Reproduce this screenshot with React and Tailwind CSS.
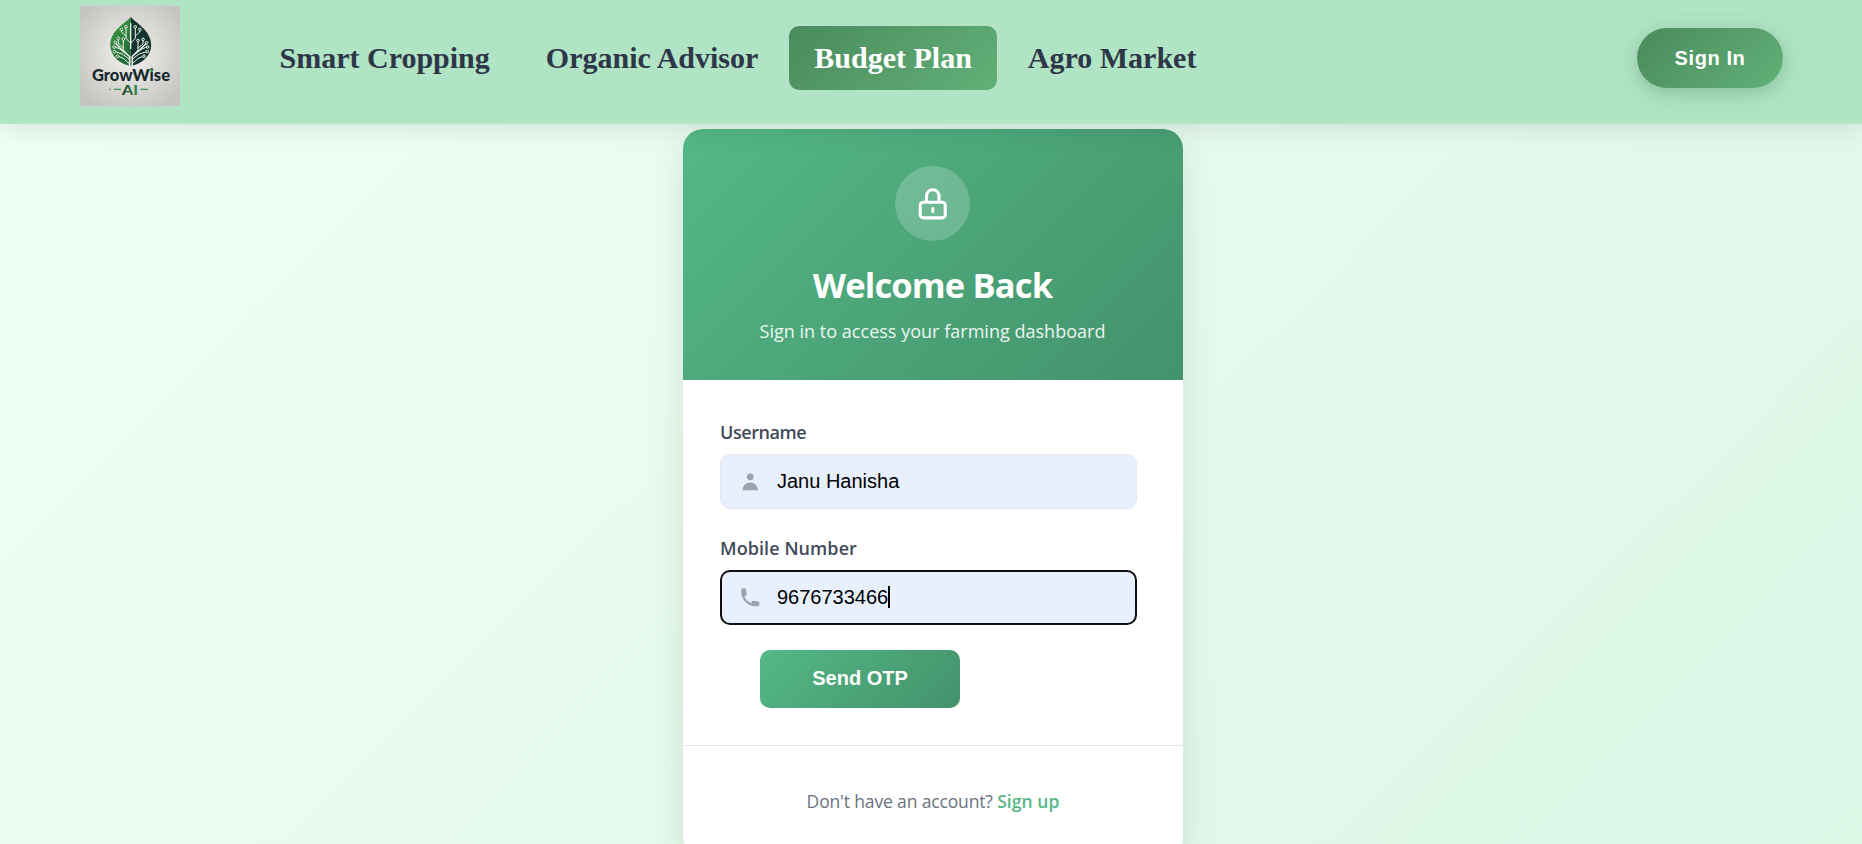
const navItems = [
  { label: "Smart Cropping" },
  { label: "Organic Advisor" },
  { label: "Budget Plan", active: true },
  { label: "Agro Market" },
];

const leafNodes = [
  [41.5, 23.5], [46, 20.8], [55.3, 20.8], [59.8, 23.5],
  [43.3, 33], [38.3, 32.4], [35.2, 36.3], [34.2, 41], [34.4, 45.6], [37.5, 50.2],
  [58, 34.5], [63, 33.4], [66.6, 36.8], [67.6, 41], [67.2, 45.6], [64, 50.2],
];

function Logo() {
  return (
    <svg viewBox="0 0 100 100" className="h-[100px] w-[100px] shrink-0" role="img" aria-label="GrowWise AI">
      <defs>
        <radialGradient id="logoBg" cx="50%" cy="48%" r="62%">
          <stop offset="0" stopColor="#f0f0ee" />
          <stop offset="0.5" stopColor="#dcdbd8" />
          <stop offset="1" stopColor="#c6c4c0" />
        </radialGradient>
        <linearGradient id="leafLeft" x1="0" y1="0" x2="0.4" y2="1">
          <stop offset="0" stopColor="#3fa044" />
          <stop offset="1" stopColor="#236b36" />
        </linearGradient>
        <linearGradient id="aiText" x1="0" y1="0" x2="1" y2="0">
          <stop offset="0" stopColor="#173a30" />
          <stop offset="1" stopColor="#379044" />
        </linearGradient>
      </defs>
      <rect width="100" height="100" fill="url(#logoBg)" />
      <path d="M50.7 10.7C46 17 30.3 24 30.3 39C30.3 50 40 58 50.7 60Z" fill="url(#leafLeft)" />
      <path d="M50.7 10.7C55.5 17 71.2 24 71.2 39C71.2 50 61.5 58 50.7 60Z" fill="#13332f" />
      <path d="M50.7 43V17" stroke="#eef4ee" strokeWidth="1.3" />
      <g fill="none" stroke="#eef4ee" strokeWidth="1" strokeLinecap="round" strokeLinejoin="round">
        <path d="M49.6 60V50.5L41.5 43.5L36 37.5M52.2 60V50.5L60 43.5L66 37.8" strokeWidth="1.5" />
        <path d="M50.7 37L46 32.5V22.5M50.7 37L55.3 32.5V22.5M46 30L41.5 26V25M55.3 30L59.8 26V25" />
        <path d="M47.5 48.5L43.3 44V34.5M43.3 42L38.3 37V34M54 48.5L58 44V36M58 42L63 38V35" />
        <path d="M45 47L40 43L35.5 41.2M49 53L42.5 48L36 46M49 57.5L43.5 52.5L39 50.6M56.5 47L62 43L66.4 41.2M52.5 53L59 48L65.6 46M52.5 57.5L58 52.5L62.5 50.6" />
      </g>
      <g fill="#2d6a3d" stroke="#eef4ee" strokeWidth="0.9">
        {leafNodes.map(([cx, cy]) => (
          <circle key={`${cx}-${cy}`} cx={cx} cy={cy} r="1.35" />
        ))}
      </g>
      <text x="12" y="75.2" textLength="78" lengthAdjust="spacingAndGlyphs" fontFamily="Lato, sans-serif" fontWeight="900" fontSize="16.5" fill="#16282b">
        GrowWise
      </text>
      <circle cx="71.6" cy="64.6" r="1.5" fill="#3d9a48" />
      <text x="42" y="89.3" textLength="16" lengthAdjust="spacingAndGlyphs" fontFamily="Lato, sans-serif" fontWeight="900" fontSize="14" fill="url(#aiText)">
        AI
      </text>
      <path d="M34 83.3H41M60.5 83.3H68M29 83.3H30.5" stroke="#3f9550" strokeWidth="1.3" />
    </svg>
  );
}

function Navbar() {
  return (
    <header className="relative z-10 flex h-[124px] shrink-0 items-start border-b border-[#b9e7cc] bg-[#b1e3c5] pl-20 pr-[79px] shadow-[0_5px_25px_rgba(0,0,0,0.1)]">
      <div className="pt-1.5">
        <Logo />
      </div>
      <nav className="ml-[74.5px] mt-[26px] flex gap-[6px] font-['Liberation_Serif',serif] text-[30px] font-bold">
        {navItems.map((item) => (
          <a
            key={item.label}
            className={
              item.active
                ? "flex h-16 items-center rounded-[10px] bg-linear-135 from-[#4a8b5c] to-[#62b078] px-[25px] pb-[2px] text-white"
                : "flex h-16 items-center rounded-[10px] px-[25px] pb-[2px] text-[#2d3748]"
            }
          >
            {item.label}
          </a>
        ))}
      </nav>
      <button className="ml-auto mt-7 h-[60px] w-[146px] rounded-full bg-linear-135 from-[#4a8b5c] to-[#62b078] pb-px font-['Liberation_Sans',sans-serif] text-xl font-bold tracking-[0.6px] text-white shadow-[0_5px_19px_rgba(74,139,92,0.4)]">
        Sign In
      </button>
    </header>
  );
}

function LockIcon() {
  return (
    <svg viewBox="0 0 24 24" className="size-[37.5px]" fill="none" stroke="white" strokeWidth="2" strokeLinecap="round" strokeLinejoin="round">
      <path d="M12 15v2m-6 4h12a2 2 0 002-2v-6a2 2 0 00-2-2H6a2 2 0 00-2 2v6a2 2 0 002 2zm10-10V7a4 4 0 00-8 0v4h8z" />
    </svg>
  );
}

function UserIcon() {
  return (
    <svg viewBox="0 0 20 20" className="size-[22.5px]" fill="#9ca3af">
      <path fillRule="evenodd" d="M10 9a3 3 0 100-6 3 3 0 000 6zm-7 9a7 7 0 1114 0H3z" clipRule="evenodd" />
    </svg>
  );
}

function PhoneIcon() {
  return (
    <svg viewBox="0 0 20 20" className="size-[22.5px]" fill="#9ca3af">
      <path d="M2 3a1 1 0 011-1h2.153a1 1 0 01.986.836l.74 4.435a1 1 0 01-.54 1.06l-1.548.773a11.037 11.037 0 006.105 6.105l.774-1.548a1 1 0 011.059-.54l4.435.74a1 1 0 01.836.986V17a1 1 0 01-1 1h-2C7.82 18 2 12.18 2 5V3z" />
    </svg>
  );
}

function Field({ label, labelSpacing, value, icon, focused }) {
  return (
    <div>
      <div className={`flex h-[27px] items-center text-[18px] font-semibold text-[#414a5a] ${labelSpacing}`}>{label}</div>
      <div
        className={
          focused
            ? "mt-2 flex h-[55px] w-[417px] items-center rounded-[10px] border-2 border-[#101010] bg-[#e8f0fe] pl-[17px]"
            : "mt-2 flex h-[55px] w-[417px] items-center rounded-[10px] border border-[#e5e7eb] bg-[#e8f0fe] pl-[18px]"
        }
      >
        {icon}
        <span className="ml-[15.5px] pb-[2px] font-['Liberation_Sans',sans-serif] text-xl text-black">{value}</span>
        {focused && <span className="mb-px h-[22px] w-[2px] bg-black" />}
      </div>
    </div>
  );
}

function LoginCard() {
  return (
    <main className="flex h-[728px] w-[500px] flex-col overflow-hidden rounded-[20px] bg-white font-['Open_Sans',sans-serif]">
      <div className="flex h-[251px] shrink-0 flex-col items-center bg-linear-135 from-[#54b886] to-[#43926b] pr-px pt-[37px]">
        <div className="flex size-[75px] items-center justify-center rounded-full bg-white/20">
          <LockIcon />
        </div>
        <h1 className="mt-5 text-[34.5px] font-bold leading-[48px] tracking-[-0.85px] text-white">Welcome Back</h1>
        <p className="mt-2 text-[18px] leading-7 tracking-[0.02px] text-white/90">Sign in to access your farming dashboard</p>
      </div>
      <div className="flex flex-col gap-[26px] pl-[37px] pt-[39px]">
        <Field label="Username" labelSpacing="tracking-[-0.45px]" value="Janu Hanisha" icon={<UserIcon />} />
        <Field label="Mobile Number" labelSpacing="tracking-[0.08px]" value="9676733466" icon={<PhoneIcon />} focused />
      </div>
      <button className="ml-[77px] mt-[25px] h-[58px] w-[200px] shrink-0 rounded-[10px] bg-linear-135 from-[#54b886] to-[#43926b] pb-[3px] font-['Liberation_Sans',sans-serif] text-xl font-bold text-white">
        Send OTP
      </button>
      <div className="mt-[37px] flex flex-1 justify-center border-t border-[#e5e7eb] pt-[41px]">
        <p className="text-[17.5px] leading-7 tracking-[-0.15px] text-[#6b7280]">
          Don't have an account? <a className="font-semibold tracking-[0.05px] text-[#54b886]">Sign up</a>
        </p>
      </div>
    </main>
  );
}

export default function App() {
  return (
    <div className="flex h-[844px] flex-col overflow-hidden bg-linear-135 from-[#f0fff4] to-[#dbf7e6]">
      <Navbar />
      <div className="flex pl-[683px] pt-[5px]">
        <div className="rounded-[20px] shadow-[0_10px_38px_rgba(0,0,0,0.1)]">
          <LoginCard />
        </div>
      </div>
    </div>
  );
}
